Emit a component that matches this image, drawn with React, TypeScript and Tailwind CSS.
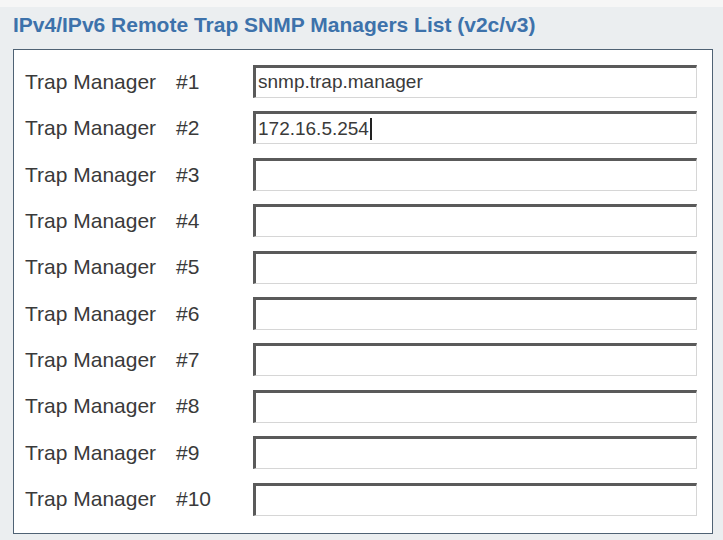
const managers = ["snmp.trap.manager", "172.16.5.254", "", "", "", "", "", "", "", ""];

function TrapRow({ index, value, focused }: { index: number; value: string; focused?: boolean }) {
  return (
    <div className="flex h-[33px] items-center">
      <div className="flex w-[228px] items-center text-[21px] text-[#3a3a3a]">
        <span className="w-[151px]">Trap Manager</span>
        <span>#{index}</span>
      </div>
      <div className="flex h-[33px] w-[444px] items-center border-t-[3px] border-l-[3px] border-r border-b border-t-[#5a5a5a] border-l-[#5a5a5a] border-r-[#d6d6d6] border-b-[#d6d6d6] bg-white pl-[2px] text-[19px] text-[#3a3a3a]">
        <span>{value}</span>
        {focused && <span className="ml-px h-[22px] w-[2px] bg-[#222]" />}
      </div>
    </div>
  );
}

export default function App() {
  return (
    <div className="h-[540px] w-[723px] bg-[#ebeef0] font-['Liberation_Sans',Arial,sans-serif]">
      <div className="h-[7px] bg-[#f6f6f6]" />
      <h2 className="px-[13px] pt-[5px] text-[21px] leading-[25px] font-bold text-[#3d72ab]">
        IPv4/IPv6 Remote Trap SNMP Managers List (v2c/v3)
      </h2>
      <div className="mx-[13px] mt-[12px] flex h-[485px] w-[700px] flex-col gap-[13.4px] border-[1.5px] border-[#4f6274] bg-white pt-[15px] pl-[11px]">
        {managers.map((v, i) => (
          <TrapRow key={i} index={i + 1} value={v} focused={i === 1} />
        ))}
      </div>
    </div>
  );
}
